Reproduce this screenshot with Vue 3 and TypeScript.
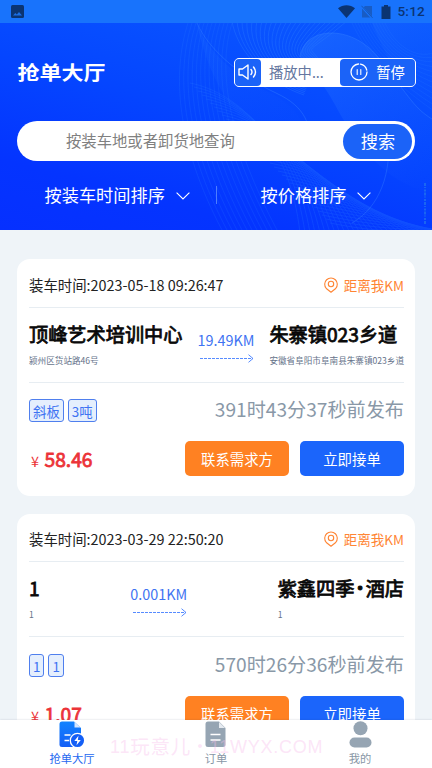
<script setup lang="ts">
interface Order {
  time: string
  from: string
  fromAddress: string
  to: string
  toAddress: string
  distance: string
  tags: string[]
  published: string
  price: string
}

const orders: Order[] = [
  {
    time: '2023-05-18 09:26:47',
    from: '顶峰艺术培训中心',
    fromAddress: '颍州区货站路46号',
    to: '朱寨镇023乡道',
    toAddress: '安徽省阜阳市阜南县朱寨镇023乡道',
    distance: '19.49KM',
    tags: ['斜板', '3吨'],
    published: '391时43分37秒前发布',
    price: '58.46',
  },
  {
    time: '2023-03-29 22:50:20',
    from: '1',
    fromAddress: '1',
    to: '紫鑫四季·酒店',
    toAddress: '1',
    distance: '0.001KM',
    tags: ['1', '1'],
    published: '570时26分36秒前发布',
    price: '1.07',
  },
]

const sorts = ['按装车时间排序', '按价格排序']

// The middle dot is set tighter than a full-width character
const parts = (name: string): string[] => name.split(/(·)/)

// Families of thin, evenly shifted curves behind the header content
const range = (n: number): number[] => Array.from({ length: n }, (_, i) => i)
const fanLines = range(24).map(
  (i) => `M${232 + i * 5} ${-2}C${236 + i * 3} ${24 + i * 0.4},${262 + i * 2} ${58 - i * 1.6},${304 + i * 0.6} ${72 - i * 1.6}`,
)
const leftLines = range(12).map(
  (i) => `M${188 + i * 4} 0C${172 + i * 4} 50,${176 + i * 5} 120,${222 + i * 5} 207`,
)
const lowLines = range(36).map(
  (i) => `M${190 + i * 4} ${60 + i * 4}C${240 + i * 4} ${70 + i * 4},${290 + i * 3} ${120 + i * 2.5},${300 + i * 5} 210`,
)
const rightLines = range(12).map(
  (i) => `M${352 + i * 3} 0C${366 + i * 3} 30,${392 + i * 3} ${60 - i * 2},440 ${92 - i * 6}`,
)
</script>

<template>
  <div class="screen">
    <div class="status">
      <svg class="status-photo" viewBox="0 0 13 13">
        <rect width="13" height="13" rx="1.5" fill="#0b3472" />
        <path d="M2 10.5 4.3 8l1.5 1.4L8 7l3 3.5z" fill="#1b6fe6" />
      </svg>
      <div class="status-right">
        <svg class="wifi" viewBox="0 0 17 13"><path d="M0 3.2C4.8-.8 12.200-.8 17 3.200L8.500 13z" fill="#0b3472" /></svg>
        <svg class="sim" viewBox="0 0 12 14">
          <path d="M4 1h7v11.500H1V4z" fill="#185cc4" />
          <path d="M0 1 11.500 13.500" stroke="#1873fb" stroke-width="2" />
          <path d="M.5 .8 11.500 12.800" stroke="#1658b8" stroke-width="1" />
        </svg>
        <svg class="battery" viewBox="0 0 10 14"><path d="M3 0h4v1.500h2.500V14H.5V1.500H3z" fill="#0b3472" /></svg>
        <span class="clock">5:12</span>
      </div>
    </div>

    <header class="header">
      <svg class="waves" viewBox="0 0 432 207" fill="none" preserveAspectRatio="none">
        <defs>
          <linearGradient id="fold" x1="0" y1="0" x2="1" y2="1">
            <stop offset="0" stop-color="#2d7dff" stop-opacity=".4" />
            <stop offset="1" stop-color="#2060ff" stop-opacity="0" />
          </linearGradient>
        </defs>
        <path d="M300 34C304 4 350 0 378 34S412 84 432 96V170C380 160 350 110 334 80S306 48 300 34z" fill="url(#fold)" />
        <path d="M197 0C207 30 240 56 270 70S312 110 310 140C270 130 215 90 197 0z" fill="url(#fold)" opacity=".4" />
        <path d="M372 0C390 44 410 72 432 84V0z" fill="url(#fold)" opacity=".5" />
        <g stroke="#3184ff" stroke-width=".7">
          <g opacity=".45"><path v-for="(d, i) in fanLines" :key="i" :d="d" /></g>
          <g opacity=".25"><path v-for="(d, i) in leftLines" :key="i" :d="d" /></g>
          <g opacity=".28"><path v-for="(d, i) in lowLines" :key="i" :d="d" /></g>
          <g opacity=".22"><path v-for="(d, i) in rightLines" :key="i" :d="d" /></g>
        </g>
        <path d="M300 34C304 4 350 0 378 34S412 84 432 96M197 0C210 30 246 56 276 70S312 102 310 130M388 110C392 150 380 184 352 200" stroke="#3b87ff" opacity=".35" />
        <path d="M425 160V202" stroke="#2d86e8" stroke-width="1.800" stroke-dasharray="3 1 1 1.500 2 1" opacity=".6" />
      </svg>

      <div class="title-row">
        <h1 class="title">抢单大厅</h1>
        <div class="player">
          <div class="player-icon">
            <svg viewBox="0 0 20 18" fill="none" stroke="#fff" stroke-width="1.400" stroke-linejoin="round" stroke-linecap="round">
              <path d="M1 6v6h3.500L10 16V2L4.500 6zM13 6.500q2 2.500 0 5M15.500 4q4 5 0 10" />
            </svg>
          </div>
          <span class="player-text">播放中...</span>
          <button class="pause">
            <svg viewBox="0 0 18 18" fill="none" stroke="#fff" stroke-width="1.300" stroke-linecap="round">
              <circle cx="9" cy="9" r="8" stroke-dasharray="37 2 9 2.300" />
              <path d="M7.200 6.500v5M10.800 6.500v5" stroke-width="1.100" />
            </svg>
            <span>暂停</span>
          </button>
        </div>
      </div>

      <div class="search">
        <span class="placeholder">按装车地或者卸货地查询</span>
        <button class="search-btn">搜索</button>
      </div>

      <div class="sorts">
        <div v-for="s in sorts" :key="s" class="sort">
          <span>{{ s }}</span>
          <svg viewBox="0 0 14 8" fill="none" stroke="#fff" stroke-width="1.100"><path d="M.6.600 7 7 13.400.6" /></svg>
        </div>
      </div>
    </header>

    <main class="list">
      <article v-for="o in orders" :key="o.time" class="card">
        <div class="card-head">
          <span>装车时间:{{ o.time }}</span>
          <span class="away">
            <svg viewBox="0 0 14 16" fill="none" stroke="#ff8534" stroke-width="1.100" stroke-linejoin="round">
              <path d="M7 15.200 2.300 11.500a6.300 6.300 0 1 1 9.400 0z" />
              <circle cx="7" cy="7" r="2.700" />
            </svg>
            <span>距离我KM</span>
          </span>
        </div>
        <div class="route">
          <div class="place">
            <strong><span>{{ o.from }}</span></strong>
            <small>{{ o.fromAddress }}</small>
          </div>
          <div class="distance">
            <span>{{ o.distance }}</span>
            <svg viewBox="0 0 55 9" fill="none" stroke="#568bff" stroke-width="1">
              <path d="M1 4.500H54" stroke-dasharray="3 1" />
              <path d="M49.500.700 54 4.500 49.500 8.300" />
            </svg>
          </div>
          <div class="place">
            <strong><span v-for="(p, i) in parts(o.to)" :key="i" :class="{ dot: p === '·' }">{{ p }}</span></strong>
            <small>{{ o.toAddress }}</small>
          </div>
        </div>
        <div class="meta">
          <div class="tags">
            <span v-for="(t, i) in o.tags" :key="i" class="tag">{{ t }}</span>
          </div>
          <span class="published">{{ o.published }}</span>
        </div>
        <div class="actions">
          <span class="price"><i>¥</i>{{ o.price }}</span>
          <button class="btn contact">联系需求方</button>
          <button class="btn accept">立即接单</button>
        </div>
      </article>
    </main>

    <nav class="tabbar">
      <div class="tab active">
        <svg class="tab-icon" viewBox="0 0 26 27">
          <defs>
            <linearGradient id="doc" x1="0" y1="0" x2="0" y2="1">
              <stop offset="0" stop-color="#1183ff" />
              <stop offset="1" stop-color="#145ff6" />
            </linearGradient>
          </defs>
          <path d="M3 .500H15L22 7V26H3Q.5 26 .5 23.500V3Q.5.500 3 .500z" fill="url(#doc)" />
          <path d="M15.500 1v5.500h6z" fill="#d5e7ff" />
          <path d="M5.500 14h6M5.500 19.500h4.500" stroke="#fff" stroke-width="1.700" />
          <circle cx="18.500" cy="19.500" r="7.200" fill="#145ff6" stroke="#fff" stroke-width="1.300" />
          <path d="M19.500 14.800 15.300 20h3l-.8 4.200L21.800 19h-3z" fill="#fff" />
        </svg>
        <span>抢单大厅</span>
      </div>
      <div class="tab">
        <svg class="tab-icon" viewBox="0 0 26 27">
          <path d="M5 .500H16L22.500 7V23.500Q22.500 26 20 26H5Q2.500 26 2.500 23.500V3Q2.500.500 5 .500z" fill="#96a5b3" />
          <path d="M16 1v6h6z" fill="#e5eaf0" />
          <path d="M7.500 13.500h10M7.500 19h10" stroke="#fff" stroke-width="1.600" />
        </svg>
        <span>订单</span>
      </div>
      <div class="tab">
        <svg class="tab-icon" viewBox="0 0 26 27" fill="#96a5b3">
          <circle cx="13.500" cy="7.300" r="7" />
          <rect x="2.500" y="16.500" width="22" height="10" rx="5" />
        </svg>
        <span>我的</span>
      </div>
      <div class="watermark"><span>11</span><b>玩意儿</b><em>・</em><span>11WYX.COM</span></div>
    </nav>
  </div>
</template>

<style>
body {
  overflow: hidden;
}
</style>

<style scoped>
.screen {
  position: relative;
  display: flex;
  flex-direction: column;
  width: 432px;
  height: 768px;
  overflow: hidden;
  background: #eff4f8;
  color: #222;
  font-family: 'Noto Sans CJK SC', sans-serif;
}
button {
  display: flex;
  align-items: center;
  justify-content: center;
  padding: 0;
  border: 0;
  color: #fff;
  font-family: inherit;
}
svg {
  display: block;
  flex: none;
}
.status {
  display: flex;
  flex: none;
  align-items: center;
  justify-content: space-between;
  height: 23px;
  padding: 0 7px 0 11px;
  background: #1873fc;
}
.status-photo {
  width: 13px;
  height: 13px;
}
.status-right {
  display: flex;
  align-items: center;
}
.wifi {
  width: 17px;
  height: 13px;
  margin-right: 6px;
}
.sim {
  width: 12px;
  height: 14px;
  margin-right: 8px;
}
.battery {
  width: 10px;
  height: 14px;
  margin-right: 6px;
}
.clock {
  color: #0b3472;
  font: 500 13.6px/23px Roboto, sans-serif;
  letter-spacing: 0.2px;
}
.header {
  position: relative;
  flex: none;
  height: 207px;
  background: linear-gradient(195deg, #0b5aff 0%, #0546ff 45%, #0434ff 78%, #0630ff 100%);
}
.waves {
  position: absolute;
  inset: 0;
  width: 432px;
  height: 207px;
}
.title-row {
  position: relative;
  display: flex;
  align-items: center;
  justify-content: space-between;
  height: 98px;
  padding: 0 16px 0 17.5px;
}
.title {
  margin: 0 0 3px;
  color: #fff;
  font-size: 22px;
  font-weight: 700;
  line-height: 30px;
  transform: scaleY(0.86);
}
.player {
  display: flex;
  box-sizing: border-box;
  width: 182px;
  height: 29px;
  border: 1px solid #fff;
  border-radius: 5px;
  background: #fff;
}
.player-icon,
.pause {
  display: flex;
  align-items: center;
  justify-content: center;
  background: #1b63f8;
  border-radius: 4px;
}
.player-icon {
  width: 26px;
}
.player-icon svg {
  width: 20px;
  height: 18px;
}
.player-text {
  flex: 1;
  padding-left: 8px;
  color: #6577a0;
  font-size: 14.3px;
  line-height: 26px;
}
.pause {
  gap: 8px;
  width: 75px;
  font-size: 14.3px;
}
.pause span {
  padding-bottom: 2px;
}
.pause svg {
  width: 18px;
  height: 18px;
}
.search {
  position: relative;
  display: flex;
  align-items: center;
  justify-content: space-between;
  height: 40px;
  margin: 0 17px;
  padding: 0 3px 0 49px;
  box-sizing: border-box;
  border-radius: 20px;
  background: #fff;
}
.placeholder {
  padding-bottom: 2px;
  color: #808080;
  font-size: 15.35px;
}
.search-btn {
  box-sizing: border-box;
  width: 69px;
  height: 35px;
  padding: 0 0 2px 1px;
  border-radius: 18px;
  background: #1b63f8;
  font-size: 17.2px;
}
.sorts {
  position: relative;
  display: flex;
  height: 69px;
}
.sort {
  display: flex;
  align-items: center;
  gap: 11px;
  box-sizing: border-box;
  width: 216px;
  height: 66px;
  padding-left: 44.5px;
  color: #fff;
  font-size: 17.2px;
}
.sort svg {
  width: 14px;
  height: 8px;
  margin-top: 4px;
}
.sort + .sort {
  background: linear-gradient(#4e7eff, #4e7eff) 0 25px / 1px 18px no-repeat;
}
.list {
  display: flex;
  flex: none;
  flex-direction: column;
  gap: 18px;
  padding: 29px 17px 0;
}
.card {
  height: 237px;
  padding: 0 11px 0 12px;
  box-sizing: border-box;
  border-radius: 13px;
  background: #fff;
}
.card-head {
  display: flex;
  align-items: center;
  justify-content: space-between;
  box-sizing: border-box;
  height: 49px;
  padding-top: 3px;
  border-bottom: 1px solid #e7edf2;
  font-size: 14.4px;
  line-height: 20px;
}
.card + .card .card-head {
  height: 48px;
}
.away {
  display: flex;
  align-items: center;
  gap: 6px;
  color: #ff8534;
  font-size: 13.5px;
}
.away svg {
  width: 14px;
  height: 16px;
}
.route {
  display: flex;
  justify-content: space-between;
  box-sizing: border-box;
  height: 75px;
  padding-top: 11px;
  border-bottom: 1px solid #e7edf2;
}
.place {
  display: flex;
  flex-direction: column;
  white-space: nowrap;
}
.place strong {
  display: flex;
  color: #090909;
  font-size: 19.2px;
  font-weight: 400;
  line-height: 30px;
  -webkit-text-stroke: 0.8px #090909;
}
.dot {
  display: flex;
  justify-content: center;
  width: 11.2px;
}
.place small {
  margin-top: 3px;
  color: #66738a;
  font-size: 8.6px;
  line-height: 16px;
}
.distance {
  display: flex;
  flex-direction: column;
  align-items: flex-end;
  padding-top: 11px;
  color: #3e73f2;
  font-size: 14.4px;
  line-height: 20px;
}
.distance svg {
  width: 55px;
  height: 9px;
  margin-top: 4px;
}
.meta {
  display: flex;
  align-items: center;
  justify-content: space-between;
  height: 56px;
}
.card + .card .meta {
  height: 57px;
}
.tags {
  display: flex;
  gap: 4px;
}
.tag {
  height: 21px;
  padding: 0 3px;
  border: 1px solid #4f7fee;
  border-radius: 3px;
  background: #e5effd;
  color: #3e73f2;
  font-size: 13.4px;
  line-height: 22px;
}
.tags {
  padding-bottom: 1px;
}
.published {
  padding-bottom: 4px;
  color: #8998a7;
  font-size: 19.15px;
}
.actions {
  display: flex;
  align-items: center;
  gap: 11px;
  height: 39px;
}
.price {
  flex: 1;
  color: #ec3338;
  font-size: 19.2px;
  -webkit-text-stroke: 0.8px #ec3338;
}
.price i {
  display: inline-block;
  width: 15.5px;
  padding-left: 2px;
  box-sizing: border-box;
  font-size: 14.4px;
  font-style: normal;
  -webkit-text-stroke: 0;
}
.btn {
  width: 104px;
  height: 35px;
  border-radius: 5px;
  font-size: 14.4px;
}
.contact {
  background: #ff8122;
}
.accept {
  background: #1b65fb;
}
.tabbar {
  position: absolute;
  right: 0;
  bottom: 0;
  left: 0;
  display: flex;
  height: 48px;
  background: #fff;
  box-shadow: 0 0 2px rgba(40, 60, 90, 0.2);
}
.tab {
  display: flex;
  flex: 1;
  flex-direction: column;
  align-items: center;
  padding-top: 1px;
  color: #8796a5;
  font-size: 11.3px;
  line-height: 18px;
}
.tab.active {
  color: #2468f0;
}
.tab-icon {
  width: 26px;
  height: 27px;
  margin-bottom: 1px;
}
.watermark {
  position: absolute;
  top: 14px;
  left: 110px;
  display: flex;
  color: rgba(247, 190, 235, 0.4);
  font: 18px/26px 'Liberation Sans', 'Noto Sans CJK SC', sans-serif;
  letter-spacing: 0.75px;
  white-space: nowrap;
}
.watermark b {
  font-size: 19.5px;
  font-weight: 400;
}
.watermark em {
  font-style: normal;
}
</style>
